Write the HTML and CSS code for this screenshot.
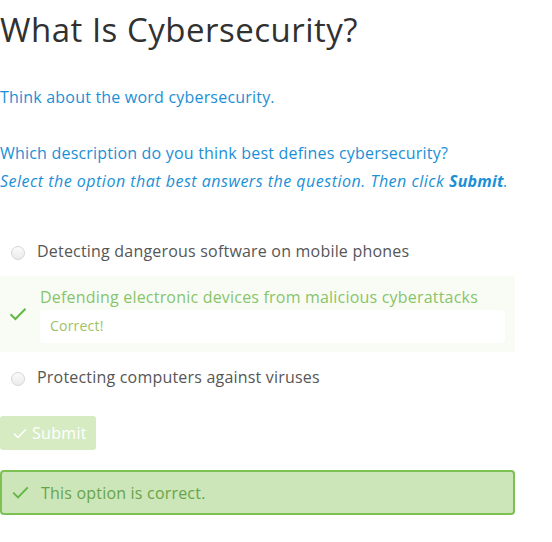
FILE: index.html
```html
<!DOCTYPE html>
<html lang="en">
<head>
<meta charset="utf-8">
<title>What Is Cybersecurity?</title>
<link rel="stylesheet" href="styles.css">
</head>
<body>
<main class="page">
  <h1 class="title">What Is Cybersecurity?</h1>
  <p class="intro">Think about the word cybersecurity.</p>
  <p class="question">Which description do you think best defines cybersecurity?</p>
  <p class="instr">Select the option that best answers the question. Then click <strong>Submit</strong>.</p>

  <ul class="options">
    <li class="option">
      <span class="radio"></span>
      <span class="label">Detecting dangerous software on mobile phones</span>
    </li>
    <li class="option correct">
      <svg class="opt-check" width="18" height="14" viewBox="0 0 18 14"><path d="M1.5 7.2 L6.4 12 L16.5 1.8" fill="none" stroke="#62b845" stroke-width="2"/></svg>
      <div class="body">
        <div class="label">Defending electronic devices from malicious cyberattacks</div>
        <div class="feedback">Correct!</div>
      </div>
    </li>
    <li class="option">
      <span class="radio"></span>
      <span class="label">Protecting computers against viruses</span>
    </li>
  </ul>

  <button class="submit" type="button">
    <svg width="14" height="11" viewBox="0 0 14 11"><path d="M1 5.6 L5 9.5 L13 1.3" fill="none" stroke="#ffffff" stroke-width="1.5"/></svg>
    Submit
  </button>

  <div class="alert">
    <svg width="17" height="13" viewBox="0 0 17 13"><path d="M1.2 6.6 L6 11.4 L15.8 1.4" fill="none" stroke="#62b845" stroke-width="2"/></svg>
    <span>This option is correct.</span>
  </div>
</main>
</body>
</html>
```

FILE: styles.css
```css
* { box-sizing: border-box; }

html, body {
  margin: 0;
  padding: 0;
  background: #ffffff;
}

body {
  font-family: "Open Sans", Lato, sans-serif;
  letter-spacing: 0.2px;
}

.page {
  width: 515px;
  padding-top: 10px;
}

.title {
  margin: 0;
  font-size: 33px;
  line-height: 40px;
  font-weight: 400;
  letter-spacing: 0.5px;
  color: #313131;
}

.intro,
.question,
.instr {
  margin: 0;
  font-size: 16px;
  line-height: 24px;
  color: #1b8fd6;
}

.intro { margin-top: 35px; }
.question { margin-top: 32px; }
.instr { margin-top: 4px; font-style: italic; letter-spacing: 0.5px; }
.instr strong { font-weight: 700; letter-spacing: 0.2px; }

.options {
  list-style: none;
  margin: 37px 0 0;
  padding: 0;
  display: flex;
  flex-direction: column;
  gap: 4px;
}

.option {
  display: flex;
  align-items: center;
  padding: 9px 0;
  color: #565656;
  font-size: 16px;
  line-height: 24px;
}

.radio {
  width: 14px;
  height: 14px;
  margin: 4px 12px 0 11px;
  border: 1px solid #d6d6d6;
  border-radius: 50%;
  background: linear-gradient(#fbfbfb, #ebebeb);
  flex: none;
}

.option.correct {
  background: #f9fcf5;
}

.opt-check {
  flex: none;
  margin: 0 13px 0 9px;
}

.correct .body {
  flex: 1;
  padding-right: 10px;
}

.correct .label {
  color: #88c46b;
}

.feedback {
  margin-top: 1px;
  background: #ffffff;
  border-radius: 4px;
  padding: 6px 10px 7px;
  font-size: 14px;
  line-height: 20px;
  color: #9dc266;
}

.submit {
  display: flex;
  align-items: center;
  gap: 5px;
  margin-top: 18px;
  width: 96px;
  height: 34px;
  padding: 0 0 0 13px;
  border: 0;
  border-radius: 3px;
  background: #d6ebc2;
  color: #ffffff;
  font-family: inherit;
  font-size: 16px;
  letter-spacing: 0.3px;
}

.alert {
  display: flex;
  align-items: center;
  margin-top: 20px;
  height: 45px;
  border: 2px solid #7bc153;
  border-radius: 4px;
  background: #cde6b9;
  padding-left: 10px;
  color: #67a449;
  font-size: 16px;
}

.alert svg {
  flex: none;
  margin-right: 12px;
}
```
